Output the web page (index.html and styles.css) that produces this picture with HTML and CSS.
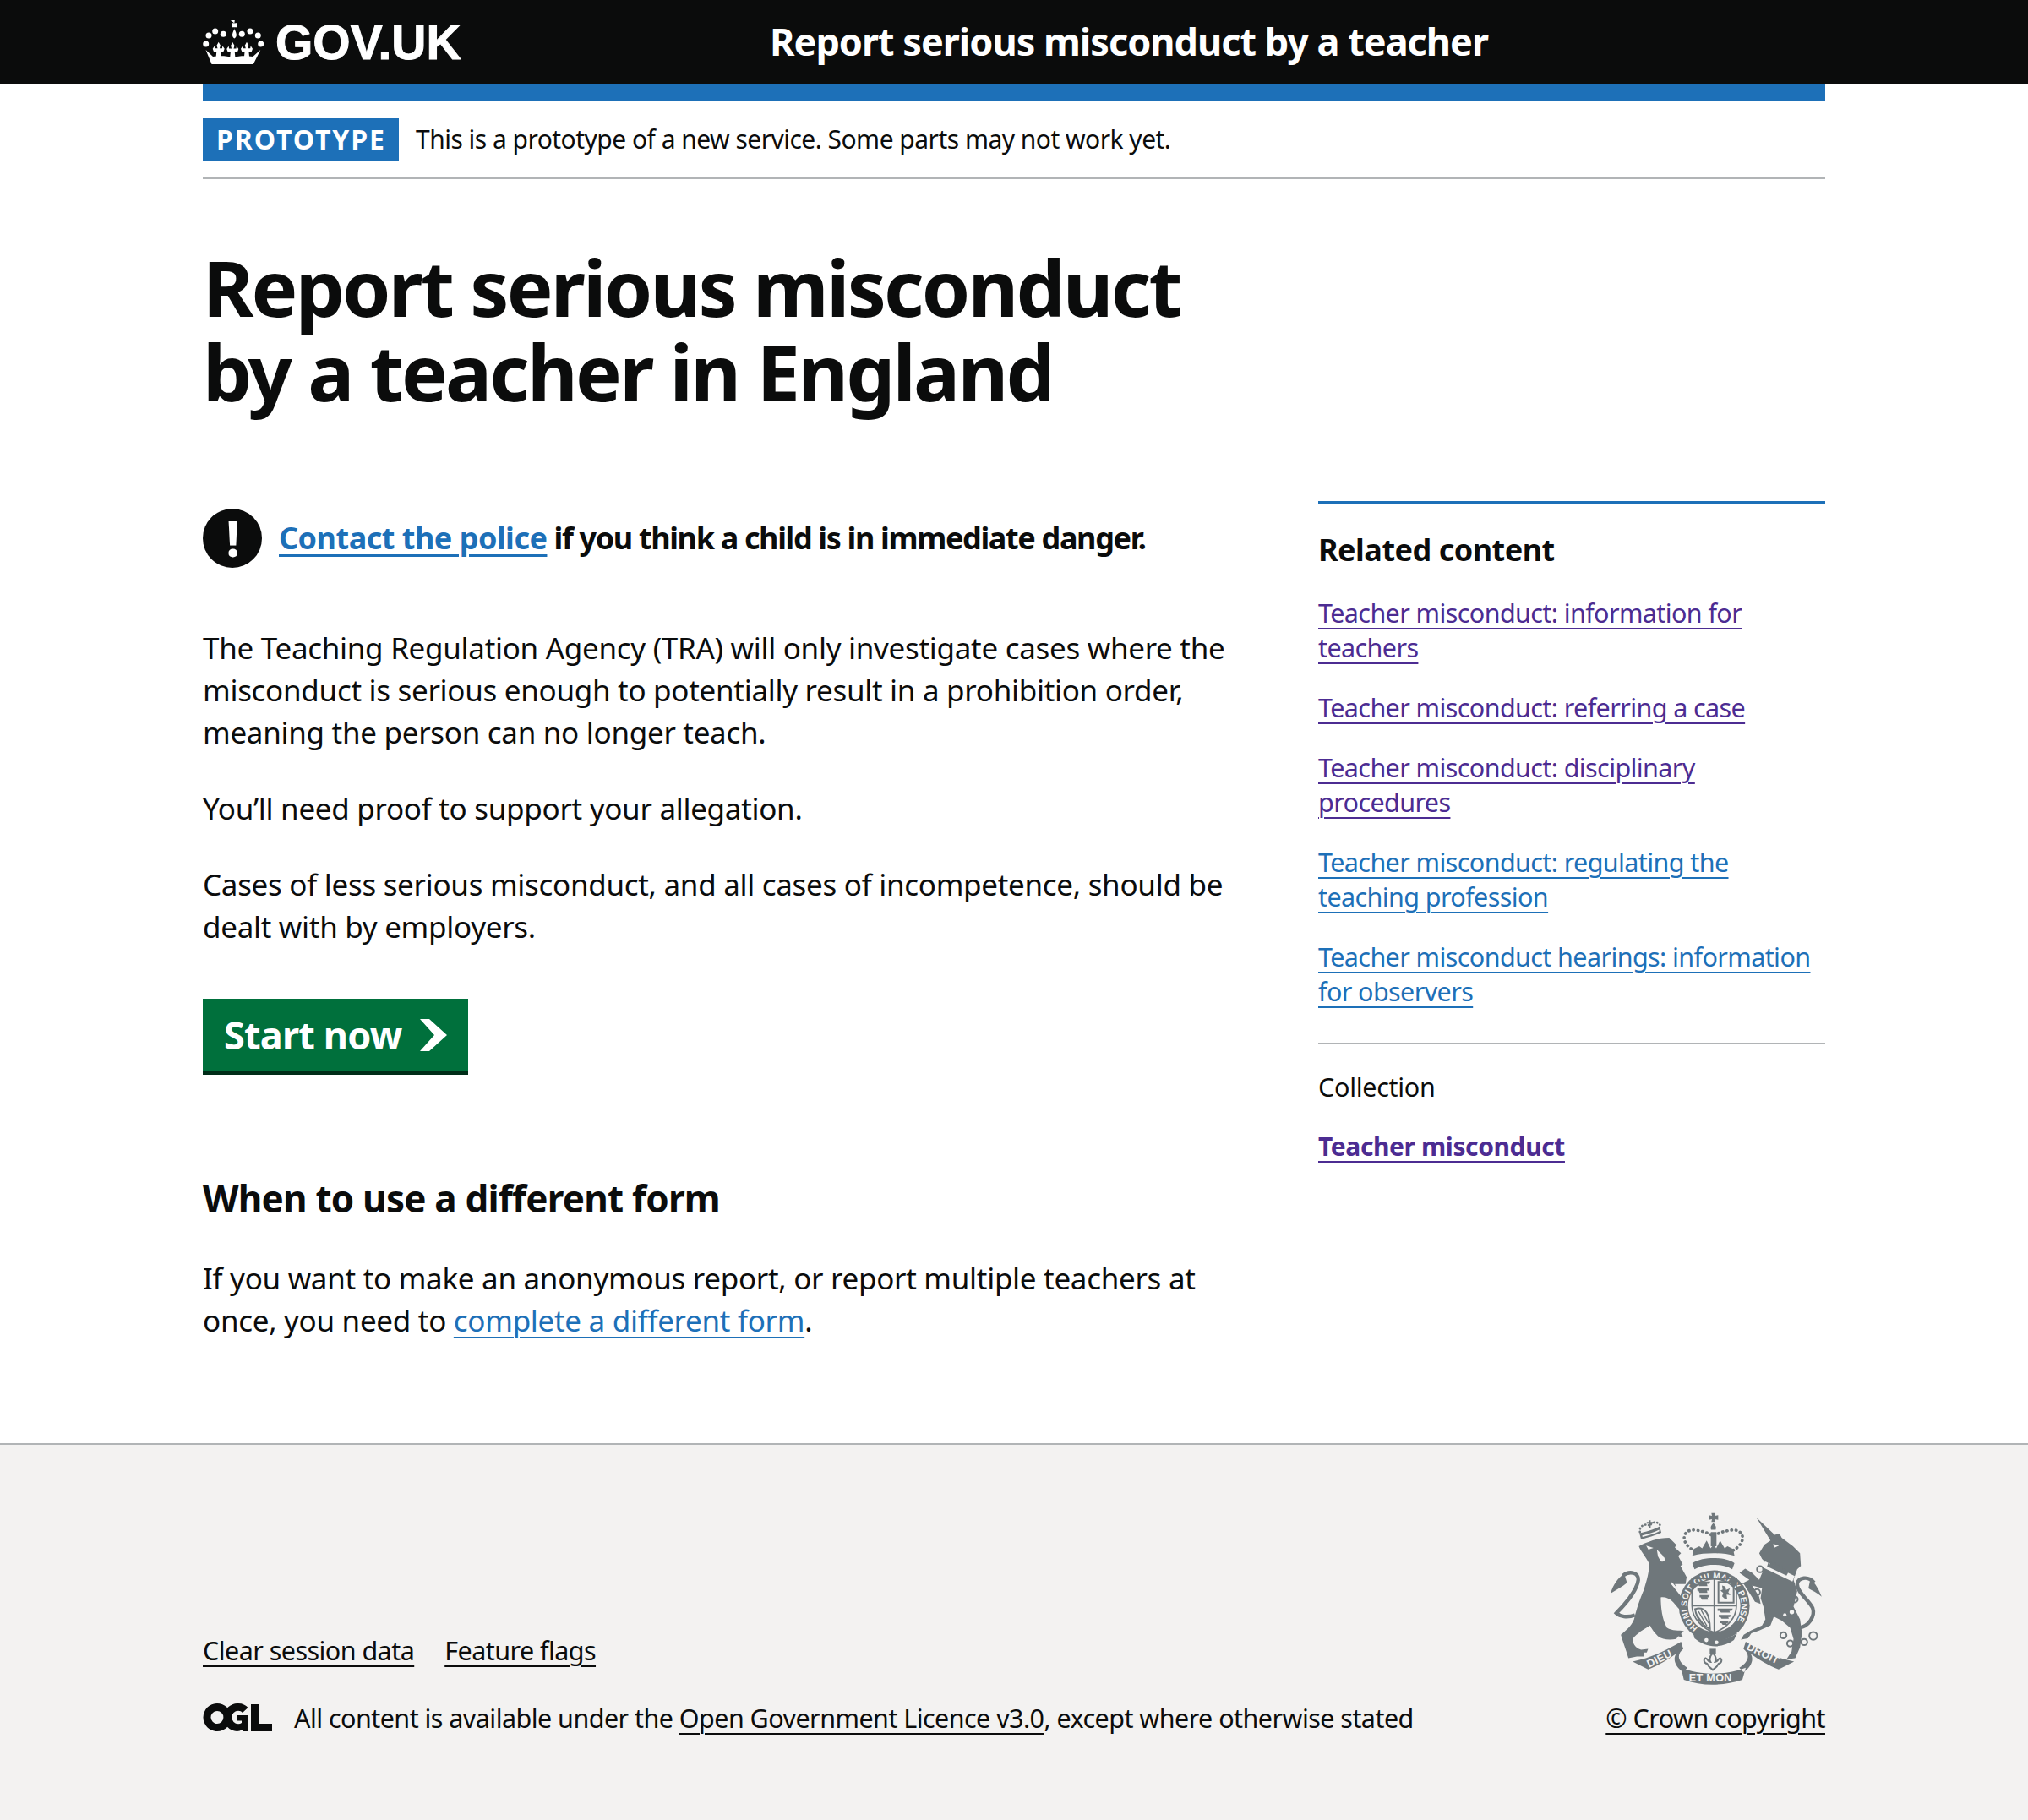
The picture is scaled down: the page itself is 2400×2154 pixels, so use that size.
FILE: index.html
```html
<!DOCTYPE html>
<html lang="en">

<head>
    <meta charset="UTF-8">
    <title>Report serious misconduct by a teacher in England</title>
    <link rel="stylesheet" href="styles.css">
</head>

<body>

    <header class="site-header">
        <div class="wrap header-inner">
            <a class="logo" href="#">
                <svg class="crown" viewBox="0 -1 72 52" aria-hidden="true">
                    <defs>
                        <path id="fleur" d="M0-9l2.200 4-1 3.500h3l.5-3 2.300 3.500-1.500 4h-3l.5 5-3 3-3-3 .5-5h-3l-1.500-4 2.300-3.500.5 3h3l-1-3.500z" />
                    </defs>
                    <path d="M32.800-1h5l-.5 3.500 3.500-.5v5.500l-3.500-.5.3 3c1.500 2.500 2.400 5 2.200 7-.2 2-1.500 3-2.400 3.500-.9-.5-2.200-1.500-2.400-3.500-.2-2 .7-4.500 2.200-7l.3-3-3.500.5V2l3.500.5z" />
                    <circle cx="7" cy="17" r="3.500" /><circle cx="14.700" cy="12" r="3.500" /><circle cx="24.300" cy="15.300" r="3.500" />
                    <circle cx="46.300" cy="15.300" r="3.500" /><circle cx="56" cy="12" r="3.500" /><circle cx="65.300" cy="17" r="3.500" />
                    <circle cx="3.700" cy="27" r="3.500" /><circle cx="68.700" cy="27" r="3.500" />
                    <use href="#fleur" x="18.700" y="33.700" />
                    <use href="#fleur" x="35.300" y="34" />
                    <use href="#fleur" x="52" y="33.700" />
                    <path d="M3.500 34l8.500 8c8-1.500 16-1 23.300 1 7.700-2 15.700-2.500 24-1l9-8-8.500 17H10.500z" />
                </svg>
                <span class="logo-text">GOV.UK</span>
            </a>
            <a class="service-name" href="#">Report serious misconduct by a teacher</a>
        </div>
    </header>

    <div class="wrap">
        <div class="header-bar"></div>

        <div class="phase-banner">
            <strong class="phase-tag">PROTOTYPE</strong>
            <span>This is a prototype of a new service. Some parts may not work yet.</span>
        </div>

        <main class="main">
            <h1>Report serious misconduct<br>by a teacher in England</h1>

            <div class="columns">
                <div class="content">
                    <div class="warning">
                        <span class="warning-icon">!</span>
                        <strong><a href="#">Contact the police</a> if you think a child is in immediate danger.</strong>
                    </div>

                    <p>The Teaching Regulation Agency (TRA) will only investigate cases where the misconduct is serious enough to potentially result in a prohibition order, meaning the person can no longer teach.</p>
                    <p>You’ll need proof to support your allegation.</p>
                    <p>Cases of less serious misconduct, and all cases of incompetence, should be dealt with by employers.</p>

                    <a class="button" href="#">
                        Start now
                        <svg class="button-arrow" viewBox="0 0 32 38" aria-hidden="true">
                            <path d="M0 0h11l21 19-21 19H0l17-19z" />
                        </svg>
                    </a>

                    <h2>When to use a different form</h2>
                    <p>If you want to make an anonymous report, or report multiple teachers at once, you need to <a href="#">complete a different form</a>.</p>
                </div>

                <aside class="related">
                    <h3>Related content</h3>
                    <ul>
                        <li><a class="visited" href="#">Teacher misconduct: information for teachers</a></li>
                        <li><a class="visited" href="#">Teacher misconduct: referring a case</a></li>
                        <li><a class="visited" href="#">Teacher misconduct: disciplinary procedures</a></li>
                        <li><a href="#">Teacher misconduct: regulating the teaching profession</a></li>
                        <li><a href="#">Teacher misconduct hearings: information for observers</a></li>
                    </ul>
                    <div class="collection">
                        <div class="collection-title">Collection</div>
                        <a class="visited collection-link" href="#">Teacher misconduct</a>
                    </div>
                </aside>
            </div>
        </main>
    </div>

    <footer class="site-footer">
        <div class="wrap footer-inner">
            <div class="footer-left">
                <div class="footer-links">
                    <a href="#">Clear session data</a>
                    <a href="#">Feature flags</a>
                </div>
                <div class="licence">
                    <svg class="ogl" viewBox="0 0 82 34" aria-hidden="true">
                        <path fill-rule="evenodd" d="M17 0a16.500 16.500 0 1 1 0 33 16.500 16.500 0 0 1 0-33zm0 9a7.500 7.500 0 1 0 0 15 7.500 7.500 0 0 0 0-15z" />
                        <path fill-rule="evenodd" d="M42 0c5 0 9 2 11.500 5L47 11c-1.300-1.400-3-2.300-5-2.300a7.800 7.800 0 0 0 0 15.600c1.500 0 2.800-.4 4-1.200v-2.600h-5v-6.500h12.500V33h-6l-1-2c-1.700 1.300-3.800 2-6 2a16.500 16.500 0 0 1 1.500-33z" />
                        <path d="M57 1h9v23h16v9H57z" />
                    </svg>
                    <span>All content is available under the <a href="#">Open Government Licence v3.0</a>, except where otherwise stated</span>
                </div>
            </div>
            <div class="footer-right">
                <svg class="crest" viewBox="0 0 900 700" aria-hidden="true">
                    <!-- lion -->
                    <path d="M172 180c28-15 68-30 108-30l25 25-5 10 22 20-10 10 16 30-8 5 22 40-4 25-38 0 30 60 18 25-13 20-23-20-17-20c-15-15-30-20-45-18 0 38 5 78 22 108 18 12 43 8 60 12l-10 10 8 13-18-5-7 10c-25 5-50 2-65-10-15-15-25-30-28-38-22 13-47 28-62 48 0 20 15 35 30 38l25-3-5 13h-10v14h-25l-30 6c-10-33-20-58-27-83 17-15 37-30 47-55 10-40 20-70 35-105 10-35 20-65 18-95-13-25-28-40-36-60z" />
                    <path fill="none" stroke="currentColor" stroke-width="13" d="M158 425c-28 10-53 5-66-7 23-23 73-78 78-118 2-25-30-35-55-15" />
                    <path d="M120 278c-22 14-40 40-48 70 20-14 40-22 58-38z" />
                    <path class="cut" d="M236 192l20 20 8 20-14 2-10-18zM198 178l26 8-18 6zM290 308l38 46-6 4-36-44z" />
                    <circle class="cut" cx="255" cy="226" r="9" />
                    <!-- lion's crown -->
                    <path d="M180 156l-6-22c20-4 50-12 72-24l6 22c-22 10-50 18-72 24z" />
                    <path class="cut" d="M184 142c18-4 42-10 60-20l1 5c-18 10-42 16-60 20z" />
                    <path fill="none" stroke="currentColor" stroke-width="8" stroke-dasharray="1 11" stroke-linecap="round" d="M176 130c-5-25 25-32 35-22 10-20 35-15 40 5" />
                    <path d="M200 94h8V88h6v6h8v6h-8v14h-6v-14h-8z" />
                    <!-- unicorn -->
                    <path d="M590 78l65 62 17-5 8 15 20 15 20 15 25 25 3 45-13 12-13 38 13 40-13 55 23 45 7 50-7 50-17 38-31 4 18-27 7-45-12-40-30-25-28-15-12 32-40 18-28 10-12 18-25 4 10-17 25-15 40-18 12-22-7-45-10-30 5-35-35-10 25 40 5 25-20-7-40-63h-10l30-15-35-25 20-15 25 15 25 25 25-60-15-15-10-20 18-30 22-15z" />
                    <path class="cut" d="M622 234l104 52-8 20-104-50zM650 172l20 6-18 8z" />
                    <path d="M628 252l4-14 5 7 6-10 6 12 8-8 4 12 9-7 3 12 9-6 2 12 9-5 1 11 8-3 0 11-5 9-66-32z" />
                    <path fill="none" stroke="currentColor" stroke-width="13" d="M742 470c33-5 58-40 48-70-15-30-55-55-55-85 3-25 40-30 60-5" />
                    <path d="M782 296c18 16 33 44 40 64-17-15-32-20-47-30z" />
                    <g fill="none" stroke="currentColor" stroke-width="6">
                        <circle cx="603" cy="262" r="11" /><circle cx="592" cy="344" r="11" /><circle cx="726" cy="369" r="11" />
                        <circle cx="686" cy="497" r="11" /><circle cx="710" cy="526" r="11" /><circle cx="760" cy="521" r="11" /><circle cx="792" cy="499" r="14" />
                    </g>
                    <circle class="cut" cx="716" cy="414" r="8" /><circle class="cut" cx="691" cy="424" r="6" />
                    <!-- crown above shield -->
                    <path d="M430 62h14l-2 10 12-2v16l-12-2 2 10h-14l2-10-12 2V70l12 2zM437 98c8 8 12 16 8 24h-16c-4-8 0-16 8-24zM428 130h20v50h-20z" />
                    <path fill="none" stroke="currentColor" stroke-width="11" stroke-dasharray="1 15" stroke-linecap="round" d="M372 198c-58-30-45-80 0-75 25 3 50 10 65 22 15-12 40-19 65-22 45-5 58 45 0 75" />
                    <path d="M362 214c25-7 50-9 75-9s50 2 75 9l-5-24-20-10-10 8-16-28-14 28-10-14-10 14-14-28-16 28-10-8-20 10z" />
                    <path d="M362 240c20-13 50-18 75-18s55 5 75 18l-8 22c-20-12-45-16-67-16s-47 4-67 16z" />
                    <!-- garter and shield -->
                    <circle cx="440" cy="392" r="126" />
                    <circle class="cut" cx="440" cy="392" r="93" />
                    <path id="garter" fill="none" d="M382 470a97 97 0 1 1 116 0" />
                    <text class="crest-text garter-text"><textPath href="#garter">HONI SOIT QUI MAL Y PENSE</textPath></text>
                    <path class="shield-line" d="M361 296h158v96c0 46-40 82-79 95-39-13-79-49-79-95zM440 296v191M361 392h158" />
                    <path d="M376 306h50l-4 8h-8l2 8h-30l-4-8h-6zM380 330h44l-4 8h-6l2 8h-28l-4-8h-4zM388 354h36l-4 8h-4l2 8h-22l-4-8h-4zM452 304h60l0 6h-60zM452 378h60l0 6h-60zM506 310h6v68h-6zM452 310h6v68h-6z" />
                    <path d="M468 320l12 4 2 12 14-6-6 14 8 10-14-2 2 16-10-2-8-8 4-12-10-8 8-4z" />
                    <path d="M452 402h54l-4 8h-8l2 6h-32l-4-6h-8zM456 424h44l-4 8h-6l2 6h-26l-4-6h-6zM462 446h30l-4 8h-4l2 6h-16l-4-6h-4z" />
                    <path fill="none" stroke="currentColor" stroke-width="6" d="M372 404c20-8 40 0 48 30 4 15 5 30 5 40-25-10-48-35-53-70z" />
                    <path fill="none" stroke="currentColor" stroke-width="4" d="M384 412l30 52M394 408l26 46M378 424l28 40" />
                    <!-- strap -->
                    <path d="M362 478c25 25 55 37 82 37s52-8 78-25l-12 24c-20 14-42 22-66 22-27 0-53-10-74-28z" />
                    <circle class="cut" cx="412" cy="514" r="7" /><circle class="cut" cx="448" cy="522" r="7" />
                    <!-- fleur and motto -->
                    <path d="M424 545h22v20h-22z" />
                    <path fill="none" stroke="currentColor" stroke-width="6" d="M435 560c-10 10-14 22-8 32-10 0-10-12-18-14-8 4-6 18 6 20l6 10 14 12 14-12 6-10c12-2 14-16 6-20-8 2-8 14-18 14 6-10 2-22-8-32z" />
                    <path d="M150 590c65-12 120-40 172-70l8 25c-25 20-20 45 15 67l-15 16c-25-16-40-43-25-66-30 23-65 43-100 56zM724 590c-65-12-120-40-172-70l-8 25c25 20 20 45-15 67l15 16c25-16 40-43 25-66 30 23 65 43 100 56zM322 612c68 28 163 28 230 0l-12 43c-70 23-145 23-208 0z" />
                    <text class="crest-text motto" x="208" y="612" transform="rotate(-26 208 612)">DIEU</text>
                    <text class="crest-text motto" x="553" y="546" transform="rotate(26 553 546)">DROIT</text>
                    <text class="crest-text motto" x="350" y="662">ET MON</text>
                </svg>
                <a href="#">© Crown copyright</a>
            </div>
        </div>
    </footer>

</body>

</html>
```

FILE: styles.css
```css
body {
    margin: 0;
    font-family: "Noto Sans", Arial, sans-serif;
    font-size: 35px;
    line-height: 50px;
    letter-spacing: -0.3px;
    color: #0b0c0c;
    background: #fff;
}

a {
    color: #1d70b8;
    text-underline-offset: 6px;
    text-decoration-thickness: 2px;
}

.wrap {
    width: 1920px;
    margin: 0 auto;
}

/* header */
.site-header {
    background: #0b0c0c;
    height: 100px;
}

.header-inner {
    display: flex;
    align-items: center;
    height: 100px;
}

.logo {
    display: flex;
    align-items: center;
    width: 671px;
    color: #fff;
    text-decoration: none;
}

.crown {
    width: 72px;
    height: 52px;
    margin-right: 14px;
    fill: #fff;
}

.logo-text {
    font-family: "Liberation Sans", Arial, sans-serif;
    font-weight: bold;
    font-size: 57px;
    letter-spacing: 0;
    -webkit-text-stroke: 1px #fff;
}

.service-name {
    margin-top: -2px;
    color: #fff;
    font-size: 45px;
    font-weight: bold;
    text-decoration: none;
    letter-spacing: -1px;
}

.header-bar {
    height: 20px;
    background: #1d70b8;
}

/* phase banner */
.phase-banner {
    display: flex;
    align-items: center;
    height: 90px;
    border-bottom: 2px solid #b1b4b6;
    font-size: 30px;
    line-height: 40px;
    letter-spacing: -0.52px;
}

.phase-tag {
    display: block;
    width: 232px;
    height: 50px;
    margin-right: 20px;
    padding-left: 16px;
    box-sizing: border-box;
    background: #1d70b8;
    color: #fff;
    font-size: 32px;
    line-height: 50px;
    letter-spacing: 1.900px;
}

/* main */
.main {
    padding: 78px 0 80px;
}

h1 {
    margin: 0 0 103px;
    font-size: 92px;
    line-height: 100px;
    letter-spacing: -2.800px;
}

h2 {
    margin: 120px 0 40px;
    font-size: 44px;
    line-height: 60px;
    letter-spacing: -0.8px;
}

h3 {
    margin: 0 0 29px;
    font-size: 36px;
    line-height: 50px;
    letter-spacing: -0.5px;
}

p {
    margin: 0 0 40px;
}

.columns {
    display: grid;
    grid-template-columns: 1240px 600px;
    gap: 80px;
}

.warning {
    display: flex;
    align-items: center;
    gap: 20px;
    margin: 9px 0 70px;
    font-size: 36px;
    letter-spacing: -1.350px;
}

.warning a {
    letter-spacing: -0.5px;
    text-decoration-thickness: 3px;
}

.warning-icon {
    flex: none;
    width: 70px;
    height: 70px;
    border-radius: 50%;
    background: #0b0c0c;
    color: #fff;
    text-align: center;
    font-size: 60px;
    font-weight: bold;
    line-height: 68px;
}

.button {
    display: inline-flex;
    align-items: center;
    gap: 22px;
    height: 86px;
    margin-top: 20px;
    padding: 0 25px 0 25px;
    background: #00703c;
    box-shadow: 0 4px 0 #002d18;
    color: #fff;
    font-size: 45px;
    font-weight: bold;
    letter-spacing: -0.8px;
    text-decoration: none;
}

.button-arrow {
    width: 32px;
    height: 38px;
    fill: #fff;
}

/* sidebar */
.related {
    align-self: start;
    padding-top: 29px;
    border-top: 4px solid #1d70b8;
    font-size: 30.500px;
    line-height: 41px;
    letter-spacing: -0.6px;
}

.related ul {
    margin: 0;
    padding: 0;
    list-style: none;
}

.related li {
    margin-bottom: 30px;
}

.visited {
    color: #4c2c92;
}

.collection {
    margin-top: 40px;
    padding-top: 30px;
    border-top: 2px solid #b1b4b6;
}

.collection-title {
    margin-bottom: 29px;
    letter-spacing: -0.3px;
}

.collection-link {
    font-size: 30px;
    font-weight: bold;
    letter-spacing: -0.4px;
}

/* footer */
.site-footer {
    background: #f3f2f1;
    border-top: 2px solid #b1b4b6;
    height: 444px;
    font-size: 30.500px;
    line-height: 40px;
    letter-spacing: -0.55px;
}

.site-footer a {
    color: #0b0c0c;
}

.footer-inner {
    display: flex;
    justify-content: space-between;
    align-items: flex-end;
    height: 263px;
    padding-top: 80px;
}

.footer-links {
    display: flex;
    gap: 36px;
    margin-bottom: 40px;
}

.licence {
    display: flex;
    align-items: center;
    gap: 26px;
}

.ogl {
    width: 82px;
    height: 34px;
    fill: #0b0c0c;
}

.footer-right {
    display: flex;
    flex-direction: column;
    align-items: flex-end;
}

.crest {
    width: 300px;
    height: 233px;
    margin: 0 -22px 10px 0;
    fill: #6f777b;
    color: #6f777b;
}

.crest .cut {
    fill: #f3f2f1;
}

.shield-line {
    fill: none;
    stroke: #6f777b;
    stroke-width: 5;
}

.crest-text {
    fill: #f3f2f1;
    font-family: "Liberation Sans", Arial, sans-serif;
    font-weight: bold;
    letter-spacing: 1px;
}

.garter-text {
    font-size: 30px;
}

.motto {
    font-size: 38px;
}
```
